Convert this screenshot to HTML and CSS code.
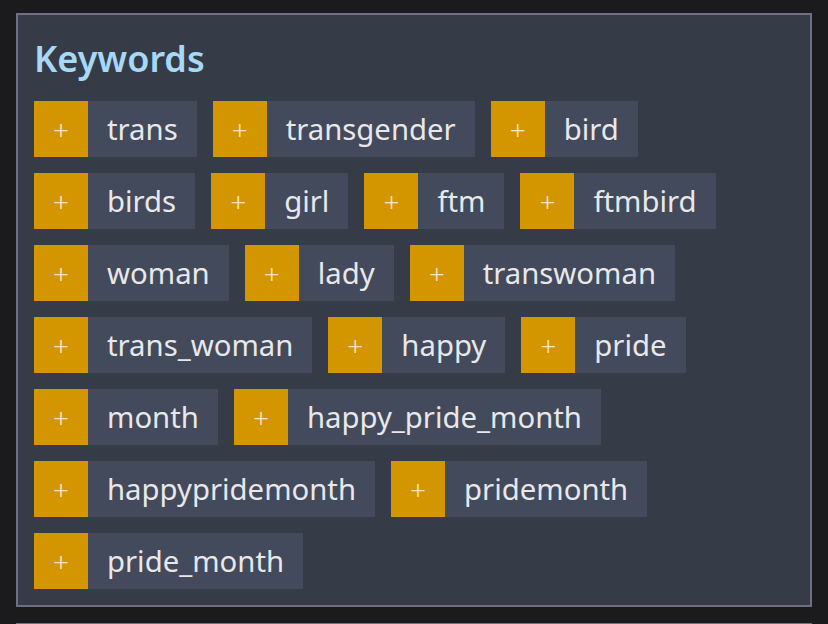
FILE: index.html
```html
<!DOCTYPE html>
<html>
<head>
<meta charset="utf-8">
<link rel="stylesheet" href="styles.css">
</head>
<body>
<section class="panel">
  <h2 class="title">Keywords</h2>
  <div class="chips">
    <div class="chip"><span class="add">+</span><span class="label">trans</span></div>
    <div class="chip"><span class="add">+</span><span class="label">transgender</span></div>
    <div class="chip"><span class="add">+</span><span class="label">bird</span></div>
    <div class="chip"><span class="add">+</span><span class="label">birds</span></div>
    <div class="chip"><span class="add">+</span><span class="label">girl</span></div>
    <div class="chip"><span class="add">+</span><span class="label">ftm</span></div>
    <div class="chip"><span class="add">+</span><span class="label">ftmbird</span></div>
    <div class="chip"><span class="add">+</span><span class="label">woman</span></div>
    <div class="chip"><span class="add">+</span><span class="label">lady</span></div>
    <div class="chip"><span class="add">+</span><span class="label">transwoman</span></div>
    <div class="chip"><span class="add">+</span><span class="label">trans_woman</span></div>
    <div class="chip"><span class="add">+</span><span class="label">happy</span></div>
    <div class="chip"><span class="add">+</span><span class="label">pride</span></div>
    <div class="chip"><span class="add">+</span><span class="label">month</span></div>
    <div class="chip"><span class="add">+</span><span class="label">happy_pride_month</span></div>
    <div class="chip"><span class="add">+</span><span class="label">happypridemonth</span></div>
    <div class="chip"><span class="add">+</span><span class="label">pridemonth</span></div>
    <div class="chip"><span class="add">+</span><span class="label">pride_month</span></div>
  </div>
</section>
<div class="next-edge"></div>
</body>
</html>
```
FILE: styles.css
```css
html, body {
  margin: 0;
  padding: 0;
  background: #1b1b1e;
  font-family: "Noto Sans", "Open Sans", sans-serif;
  overflow: hidden;
  height: 624px;
}
body {
  box-sizing: border-box;
  padding: 13px 16px 0 16px;
}
.panel {
  box-sizing: border-box;
  width: 796px;
  height: 594px;
  background: #363c47;
  border: 2px solid #6e6e84;
  padding: 16px 16px 0 16px;
}
.next-edge {
  margin-top: 16px;
  width: 796px;
  height: 1px;
  background: #6e6e84;
}
.title {
  margin: 0 0 14px 0;
  font-size: 36px;
  line-height: 56px;
  font-weight: 600;
  color: #a7d8f6;
}
.chips {
  display: flex;
  flex-wrap: wrap;
}
.chip {
  display: flex;
  height: 56px;
  margin: 0 16px 16px 0;
}
.add {
  width: 54px;
  background: #d39600;
  color: #f7e9cc;
  font-size: 28px;
  line-height: 56px;
  text-align: center;
  font-weight: 300;
}
.label {
  background: #434a5b;
  color: #e8e8ea;
  font-size: 29.3px;
  line-height: 56px;
  font-weight: 400;
  padding: 0 19px;
}
```
